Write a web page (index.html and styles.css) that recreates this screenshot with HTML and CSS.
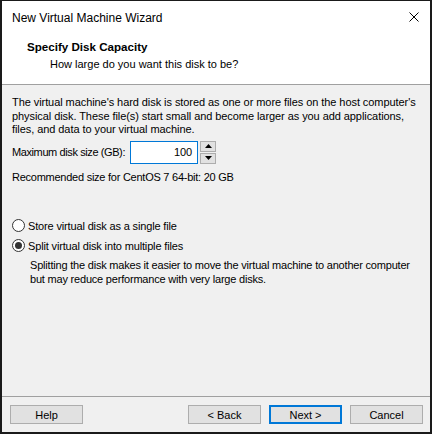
FILE: index.html
```html
<!DOCTYPE html>
<html>
<head>
<meta charset="utf-8">
<link rel="stylesheet" href="styles.css">
</head>
<body>
<div class="window">
  <div class="top">
    <div class="titlebar">
      <span class="title">New Virtual Machine Wizard</span>
      <svg class="close" width="10" height="10" viewBox="0 0 10 10"><path d="M0.5 0.5 L9.5 9.5 M9.5 0.5 L0.5 9.5" stroke="#000" stroke-width="1" fill="none"/></svg>
    </div>
    <div class="header">
      <div class="h-title">Specify Disk Capacity</div>
      <div class="h-sub">How large do you want this disk to be?</div>
    </div>
  </div>
  <div class="content">
    <p class="para">The virtual machine's hard disk is stored as one or more files on the host computer's physical disk. These file(s) start small and become larger as you add applications, files, and data to your virtual machine.</p>
    <div class="size-row">
      <span class="label">Maximum disk size (GB):</span>
      <div class="input">100</div>
      <div class="spin">
        <div class="spin-btn"><svg width="7" height="4" viewBox="0 0 7 4"><path d="M3.5 0 L7 4 L0 4 Z" fill="#000"/></svg></div>
        <div class="spin-btn"><svg width="7" height="4" viewBox="0 0 7 4"><path d="M0 0 L7 0 L3.5 4 Z" fill="#000"/></svg></div>
      </div>
    </div>
    <div class="rec">Recommended size for CentOS 7 64-bit: 20 GB</div>
    <div class="radio-row first"><span class="radio"></span><span>Store virtual disk as a single file</span></div>
    <div class="radio-row"><span class="radio checked"></span><span>Split virtual disk into multiple files</span></div>
    <p class="desc">Splitting the disk makes it easier to move the virtual machine to another computer but may reduce performance with very large disks.</p>
  </div>
  <div class="footer">
    <div class="btn">Help</div>
    <div class="spacer"></div>
    <div class="btn">&lt; Back</div>
    <div class="btn primary">Next &gt;</div>
    <div class="btn">Cancel</div>
  </div>
</div>
</body>
</html>
```
FILE: styles.css
```css
* { box-sizing: border-box; }
html, body { margin: 0; padding: 0; }
body {
  width: 432px;
  height: 434px;
  font-family: "Liberation Sans", Arial, sans-serif;
  font-size: 11px;
  color: #000;
  background: #000;
}
.window {
  width: 432px;
  height: 434px;
  border-top: 1px solid #1a1a1a;
  border-left: 2px solid #1a1a1a;
  border-right: 2px solid #1a1a1a;
  border-bottom: 2px solid #1a1a1a;
  background: #f0f0f0;
  display: flex;
  flex-direction: column;
}
.top {
  background: #fff;
  height: 84px;
  border-bottom: 1px solid #a0a0a0;
  flex: none;
}
.titlebar {
  height: 32px;
  display: flex;
  align-items: center;
  padding-left: 10px;
  padding-right: 11px;
}
.title {
  font-size: 12px;
  flex: 1;
  padding-top: 1px;
}
.close { display: block; }
.header {
  padding-left: 25px;
}
.h-title {
  font-weight: bold;
  line-height: 16px;
  font-size: 11.6px;
  margin-top: 6px;
}
.h-sub {
  padding-left: 23px;
  line-height: 16px;
  margin-top: 1px;
}
.content {
  flex: 1;
  padding: 11px 8px 0 10px;
  border-bottom: 1px solid #a0a0a0;
  letter-spacing: -0.15px;
}
.para {
  margin: 0;
  line-height: 13.5px;
  letter-spacing: -0.07px;
}
.size-row {
  display: flex;
  align-items: center;
  margin-top: 4px;
  height: 23px;
}
.label {
  width: 118px;
  flex: none;
  white-space: nowrap;
  letter-spacing: -0.4px;
}
.input {
  width: 68px;
  height: 23px;
  border: 1px solid #0078d7;
  background: #fff;
  text-align: right;
  padding-right: 5px;
  line-height: 21px;
}
.spin {
  margin-left: 2px;
  display: flex;
  flex-direction: column;
  gap: 1px;
  height: 23px;
}
.spin-btn {
  width: 16px;
  height: 11px;
  background: #e1e1e1;
  border: 1px solid #adadad;
  display: flex;
  align-items: center;
  justify-content: center;
}
.spin-btn svg { display: block; }
.rec {
  margin-top: 7px;
  line-height: 13px;
  letter-spacing: -0.25px;
}
.radio-row {
  display: flex;
  align-items: center;
  height: 20px;
  gap: 3px;
}
.radio-row.first { margin-top: 32px; }
.radio {
  width: 13px;
  height: 13px;
  border-radius: 50%;
  border: 1px solid #333;
  background: #fff;
  display: flex;
  align-items: center;
  justify-content: center;
  flex: none;
}
.radio.checked::after {
  content: "";
  width: 7px;
  height: 7px;
  border-radius: 50%;
  background: #333;
}
.desc {
  margin: 2px 0 0 18px;
  line-height: 14px;
  letter-spacing: -0.2px;
}
.footer {
  height: 35px;
  display: flex;
  align-items: flex-start;
  padding: 8px 7px 0 8px;
  gap: 8px;
}
.spacer { flex: 1; }
.btn {
  width: 73px;
  height: 19px;
  background: #e1e1e1;
  border: 1px solid #adadad;
  display: flex;
  align-items: center;
  justify-content: center;
  font-size: 11px;
}
.btn.primary {
  border: 2px solid #0078d7;
}
```
